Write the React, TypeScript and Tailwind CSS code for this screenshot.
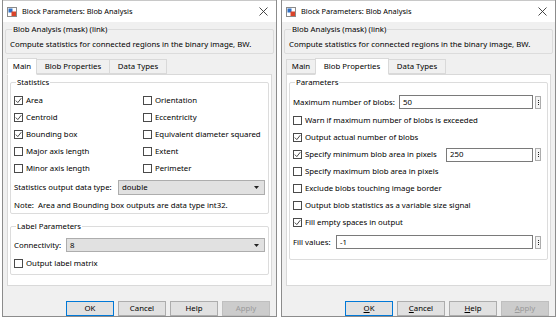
import React from 'react';

const font = "font-['Noto_Sans','Open_Sans',sans-serif]";

function BlockIcon() {
  return (
    <svg width="10" height="10" viewBox="0 0 10 10" className="shrink-0">
      <rect x="0.5" y="0.5" width="9" height="9" fill="#ffffff" stroke="#8a8a8a" />
      <rect x="1.5" y="1.5" width="4" height="4" fill="#2f6fc4" />
      <rect x="4.5" y="4.5" width="4.5" height="4.5" fill="#d9442b" />
    </svg>
  );
}

function Check({ checked }: { checked?: boolean }) {
  return (
    <span className="w-[9px] h-[9px] border border-[#4a4a4a] bg-white flex items-center justify-center shrink-0">
      {checked && (
        <svg width="7" height="7" viewBox="0 0 7 7">
          <path d="M0.8 3.6 L2.8 5.6 L6.3 1.2" fill="none" stroke="#333" strokeWidth="0.9" />
        </svg>
      )}
    </span>
  );
}

function CheckRow({ label, checked }: { label: string; checked?: boolean }) {
  return (
    <div className="h-[17px] flex items-center gap-[3px] whitespace-nowrap">
      <Check checked={checked} />
      <span>{label}</span>
    </div>
  );
}

function Dropdown({ value, h }: { value: string; h: string }) {
  return (
    <div className={`flex-1 ${h} bg-[#e1e1e1] border border-[#adadad] flex items-center pl-[3px] pr-[5px]`}>
      <span className="flex-1">{value}</span>
      <svg width="5" height="3" viewBox="0 0 5 3">
        <path d="M0 0 H5 L2.5 3 Z" fill="#222" />
      </svg>
    </div>
  );
}

function Field({ value }: { value: string }) {
  return (
    <div className="flex-1 flex items-center gap-[2px]">
      <div className="flex-1 h-[14px] bg-white border border-[#7a7a7a] flex items-center pl-[3px]">{value}</div>
      <div className="w-[6px] h-[13px] border border-[#adadad] bg-[#f3f3f3] flex flex-col items-center justify-center gap-[1px]">
        <span className="w-[1px] h-[1px] bg-[#222]" />
        <span className="w-[1px] h-[1px] bg-[#222]" />
        <span className="w-[1px] h-[1px] bg-[#222]" />
      </div>
    </div>
  );
}

function Group({ title, children, className }: { title: string; children: React.ReactNode; className?: string }) {
  return (
    <fieldset className={`border border-[#dcdcdc] rounded-[2px] ${className ?? ''}`}>
      <legend className="ml-[2px] px-[1px] leading-[14px]">{title}</legend>
      {children}
    </fieldset>
  );
}

function Btn({ label, u, primary, disabled }: { label: string; u?: boolean; primary?: boolean; disabled?: boolean }) {
  const look = disabled
    ? 'bg-[#cccccc] border-[#bfbfbf] text-[#9a9a9a]'
    : primary
      ? 'bg-[#e1e1e1] border-[#0078d7]'
      : 'bg-[#e1e1e1] border-[#adadad]';
  return (
    <div className={`h-[15px] w-[48px] flex items-center justify-center border ${look}`}>
      {u ? (
        <span>
          <span className="underline">{label[0]}</span>
          {label.slice(1)}
        </span>
      ) : (
        label
      )}
    </div>
  );
}

function Window({ tab, underline, children }: { tab: number; underline?: boolean; children: React.ReactNode }) {
  const tabs = ['Main', 'Blob Properties', 'Data Types'];
  const widths = ['w-[30px]', 'w-[74px]', 'w-[58px]'];
  return (
    <div className="w-[275px] h-[317px] flex flex-col border-l border-b border-r border-[#8c8c8c] overflow-hidden">
      <div className="h-[22px] bg-white flex items-center pl-[4px] pr-[8px] gap-[5px] border-t border-[#c8c8c8]">
        <BlockIcon />
        <span className="text-[7.4px]">Block Parameters: Blob Analysis</span>
        <svg width="9" height="9" viewBox="0 0 9 9" className="ml-auto">
          <path d="M0.5 0.5 L8.5 8.5 M8.5 0.5 L0.5 8.5" stroke="#333" strokeWidth="0.9" />
        </svg>
      </div>
      <div className="flex-1 bg-[#f0f0f0] flex flex-col px-[4px]">
        <Group title="Blob Analysis (mask) (link)" className="-mx-[2px] pl-[4px] pb-[1px]">
          <div className="leading-[15px] pt-[1px] whitespace-nowrap">
            Compute statistics for connected regions in the binary image, BW.
          </div>
        </Group>
        <div className="flex items-end h-[20px]">
          {tabs.map((t, i) => (
            <div
              key={t}
              className={`${widths[i]} flex items-center justify-center border border-[#d9d9d9] whitespace-nowrap ${
                i === tab ? 'h-[17px] bg-white border-b-white -mb-[1px] z-10' : 'h-[15px] bg-[#f0f0f0]'
              } ${i > 0 ? '-ml-[1px]' : ''}`}
            >
              {t}
            </div>
          ))}
        </div>
        <div className="h-[212px] bg-white border border-[#d9d9d9] px-[2px]">{children}</div>
        <div className="flex justify-end gap-[4px] mt-[15px] pr-[2px]">
          <Btn label="OK" u={underline} primary />
          <Btn label="Cancel" u={underline} />
          <Btn label="Help" u={underline} />
          <Btn label="Apply" u={underline} disabled />
        </div>
      </div>
    </div>
  );
}

export default function App() {
  return (
    <div className={`w-[557px] h-[322px] bg-white flex gap-[4px] pl-[2px] text-[7.8px] leading-[11px] text-black ${font}`}>
      <Window tab={0}>
        <Group title="Statistics" className="px-[3px]">
          <div className="grid grid-cols-[129px_1fr] pt-[3px]">
            <CheckRow label="Area" checked />
            <CheckRow label="Orientation" />
            <CheckRow label="Centroid" checked />
            <CheckRow label="Eccentricity" />
            <CheckRow label="Bounding box" checked />
            <CheckRow label="Equivalent diameter squared" />
            <CheckRow label="Major axis length" />
            <CheckRow label="Extent" />
            <CheckRow label="Minor axis length" />
            <CheckRow label="Perimeter" />
          </div>
          <div className="flex items-center mt-[3px]">
            <span className="w-[104px]">Statistics output data type:</span>
            <Dropdown value="double" h="h-[15px]" />
          </div>
          <div className="leading-[15px] mt-[3px] whitespace-nowrap">
            Note:&nbsp; Area and Bounding box outputs are data type int32.
          </div>
        </Group>
        <Group title="Label Parameters" className="px-[3px] pb-[2px] mt-[5px]">
          <div className="flex items-center mt-[5px]">
            <span className="w-[52px]">Connectivity:</span>
            <Dropdown value="8" h="h-[14px]" />
          </div>
          <div className="mt-[3px]">
            <CheckRow label="Output label matrix" />
          </div>
        </Group>
      </Window>
      <Window tab={1} underline>
        <Group title="Parameters" className="pl-[3px] pr-[6px] pb-[10px]">
          <div className="flex items-center mt-[6px]">
            <span className="w-[106px]">Maximum number of blobs:</span>
            <Field value="50" />
          </div>
          <div className="mt-[3px]">
            <CheckRow label="Warn if maximum number of blobs is exceeded" />
            <CheckRow label="Output actual number of blobs" checked />
            <div className="flex items-center">
              <div className="w-[153px]">
                <CheckRow label="Specify minimum blob area in pixels" checked />
              </div>
              <Field value="250" />
            </div>
            <CheckRow label="Specify maximum blob area in pixels" />
            <CheckRow label="Exclude blobs touching image border" />
            <CheckRow label="Output blob statistics as a variable size signal" />
            <CheckRow label="Fill empty spaces in output" checked />
          </div>
          <div className="flex items-center mt-[4px]">
            <span className="w-[43px]">Fill values:</span>
            <Field value="-1" />
          </div>
        </Group>
      </Window>
    </div>
  );
}
